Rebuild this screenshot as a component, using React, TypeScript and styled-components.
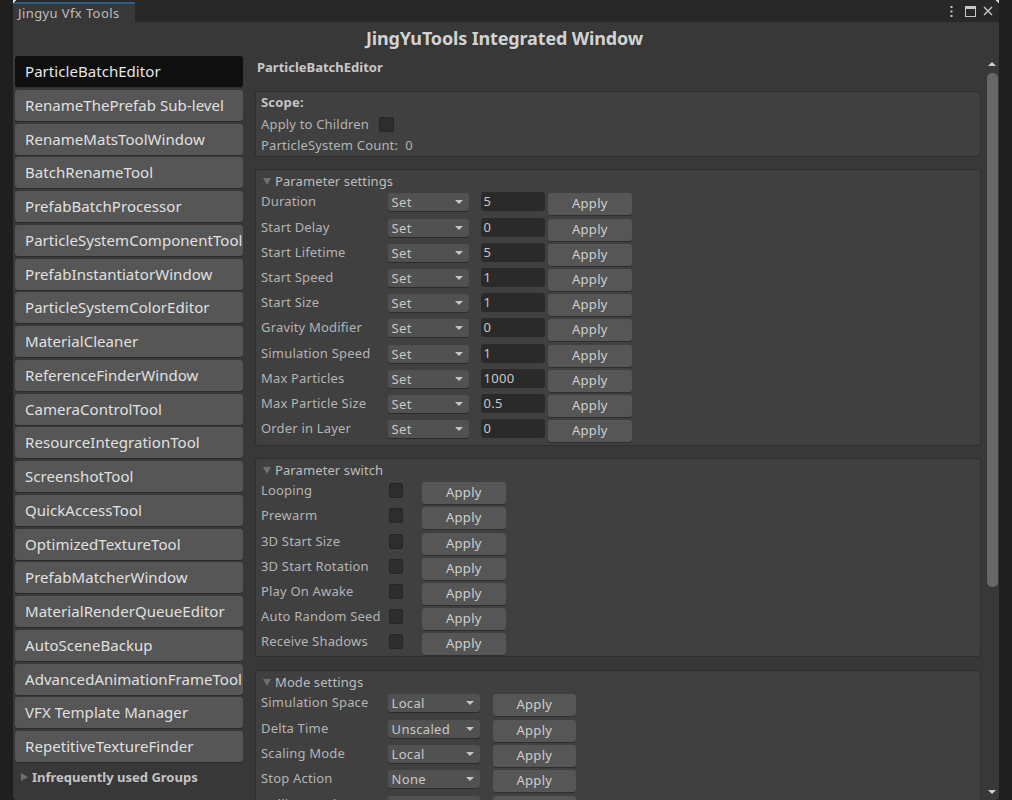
import styled, { createGlobalStyle } from "styled-components"

const GlobalStyle = createGlobalStyle`
  html, body {
    margin: 0;
    height: 800px;
    overflow: hidden;
    background: #1f1f1f;
    font-family: "Noto Sans", "Open Sans", sans-serif;
  }
  * {
    box-sizing: border-box;
  }
`

const Page = styled.div`
  height: 800px;
  padding-left: 13px;
  padding-right: 13px;
  background: #1f1f1f;
  overflow: hidden;
`
const Win = styled.div`
  height: 800px;
  display: flex;
  flex-direction: column;
  background: #383838;
  border-radius: 0 0 4px 4px;
  overflow: hidden;
`
const TabBar = styled.div`
  height: 22px;
  flex: none;
  position: relative;
  display: flex;
  align-items: stretch;
  justify-content: space-between;
  background: #282828;
  &::before,
  &::after {
    content: "";
    position: absolute;
    top: 0;
    width: 4px;
    height: 4px;
  }
  &::before {
    left: 0;
    background: linear-gradient(135deg, #d8d8d8 45%, transparent 50%);
  }
  &::after {
    right: 0;
    background: linear-gradient(225deg, #d8d8d8 45%, transparent 50%);
  }
`
const Tab = styled.div`
  width: 122px;
  margin-top: 2px;
  padding: 1px 0 0 5px;
  border-top: 2px solid #2c5d87;
  background: #383838;
  color: #bdbdbd;
  font-size: 13px;
  line-height: 17px;
  letter-spacing: 0.4px;
`
const TabIcons = styled.div`
  display: flex;
  align-items: center;
  gap: 7px;
  padding: 0 6px 0 0;
  color: #c8c8c8;
`
const DotsIcon = styled.svg`
  margin-right: 5px;
`
const Title = styled.h1`
  height: 34px;
  flex: none;
  margin: 0;
  padding-right: 3px;
  text-align: center;
  color: #d2d2d2;
  font-size: 18px;
  font-weight: 700;
  line-height: 32px;
  letter-spacing: -0.15px;
`
const Body = styled.div`
  flex: 1;
  min-height: 0;
  display: flex;
  padding-left: 2px;
`
const Sidebar = styled.div`
  width: 228px;
  flex: none;
  display: flex;
  flex-direction: column;
  gap: 2.75px;
`
const NavButton = styled.div<{ $active?: boolean }>`
  height: 31px;
  flex: none;
  padding-left: 10px;
  border-radius: 3px;
  background: ${(p) => (p.$active ? "#0f0f0f" : "#565656")};
  box-shadow: 0 1px 0 #2b2b2b;
  color: ${(p) => (p.$active ? "#e6e6e6" : "#e0e0e0")};
  font-size: 15px;
  line-height: 31px;
  letter-spacing: 0.05px;
  white-space: nowrap;
  overflow: hidden;
`
const Foldout = styled.div`
  display: flex;
  align-items: center;
  gap: 4px;
  height: 25px;
  padding-left: 6px;
  color: #c4c4c4;
  font-size: 13px;
  font-weight: 700;
`
const Triangle = styled.span<{ $dir: "right" | "down" }>`
  width: 0;
  height: 0;
  flex: none;
  ${(p) =>
    p.$dir === "right"
      ? "border-top: 4.5px solid transparent; border-bottom: 4.5px solid transparent; border-left: 7px solid #6f6f6f;"
      : "border-left: 4.5px solid transparent; border-right: 4.5px solid transparent; border-top: 7px solid #6f6f6f;"}
`
const Main = styled.div`
  width: 726px;
  flex: none;
  margin-left: 12px;
  overflow: hidden;
`
const Heading = styled.div`
  height: 35px;
  padding: 2px 0 0 2px;
  color: #c8c8c8;
  font-size: 13px;
  font-weight: 700;
  line-height: 18px;
`
const Section = styled.div<{ $bottom?: number; $gap?: number }>`
  margin-bottom: ${(p) => p.$gap ?? 12}px;
  padding: 1px 5px ${(p) => p.$bottom ?? 1.5}px;
  border: 1px solid #2e2e2e;
  border-radius: 3px;
  background: #404040;
`
const ScopeSection = styled(Section)`
  padding-top: 0;
  padding-bottom: 0;
`
const ScopeTitle = styled.div`
  height: 21.5px;
  color: #c4c4c4;
  font-size: 13px;
  font-weight: 700;
  line-height: 20px;
  letter-spacing: 0.2px;
`
const ScopeRow = styled.div`
  display: flex;
  align-items: center;
  gap: 10px;
  height: 21.2px;
`
const SectionHeader = styled.div`
  height: 20.5px;
  display: flex;
  align-items: center;
  gap: 4px;
  padding-left: 2px;
  color: #bdbdbd;
  font-size: 13px;
  letter-spacing: 0.1px;
`
const Row = styled.div<{ $pitch: number }>`
  height: ${(p) => p.$pitch}px;
  display: flex;
  align-items: flex-start;
`
const Label = styled.div<{ $wide?: boolean }>`
  width: ${(p) => (p.$wide ? "auto" : "126.6px")};
  flex: none;
  color: #b4b4b4;
  font-size: 13px;
  line-height: 20px;
  letter-spacing: 0.18px;
  white-space: nowrap;
`
const Select = styled.div<{ $width: number }>`
  width: ${(p) => p.$width}px;
  height: 18px;
  flex: none;
  margin-top: 2px;
  padding: 0 6px 0 4px;
  display: flex;
  align-items: center;
  justify-content: space-between;
  border-radius: 3px;
  background: #515151;
  box-shadow: 0 1px 0 #2b2b2b;
  color: #c8c8c8;
  font-size: 13px;
  letter-spacing: 0.3px;
`
const SelectArrow = styled.span`
  width: 0;
  height: 0;
  border-left: 4px solid transparent;
  border-right: 4px solid transparent;
  border-top: 4.5px solid #c4c4c4;
`
const NumberField = styled.div`
  width: 64px;
  height: 19px;
  flex: none;
  margin: 1px 3.5px 0 12px;
  padding-left: 3px;
  border-radius: 3px;
  background: #2a2a2a;
  color: #c8c8c8;
  font-size: 13px;
  line-height: 19px;
  letter-spacing: 0.3px;
`
const Check = styled.span`
  width: 14.5px;
  height: 15px;
  flex: none;
  border-radius: 3px;
  background: #2d2d2d;
  box-shadow: inset 0 0 0 1px #262626;
`
const SwitchCheck = styled(Check)`
  margin: 3px 19px 0 1px;
`
const ApplyButton = styled.div<{ $left?: number }>`
  width: 83.5px;
  height: 22px;
  flex: none;
  margin-top: 2px;
  margin-left: ${(p) => p.$left ?? 0}px;
  border-radius: 3px;
  background: #565656;
  box-shadow: 0 1px 0 #2e2e2e;
  color: #cfcfcf;
  font-size: 13px;
  line-height: 21px;
  text-align: center;
  letter-spacing: 0.3px;
`
const Scrollbar = styled.div`
  width: 15px;
  flex: none;
  margin-left: 2px;
  display: flex;
  flex-direction: column;
  align-items: center;
  padding-left: 3px;
`
const ScrollUp = styled.span`
  margin-top: 6px;
  width: 0;
  height: 0;
  border-left: 4px solid transparent;
  border-right: 4px solid transparent;
  border-bottom: 4px solid #d0d0d0;
`
const ScrollThumb = styled.div`
  width: 11px;
  height: 514px;
  margin-top: 7px;
  border-radius: 5px;
  background: #676767;
`
const ScrollDown = styled.span`
  margin-top: auto;
  margin-bottom: 6px;
  width: 0;
  height: 0;
  border-left: 4px solid transparent;
  border-right: 4px solid transparent;
  border-top: 4px solid #d0d0d0;
`

const tools = [
  "RenameThePrefab Sub-level",
  "RenameMatsToolWindow",
  "BatchRenameTool",
  "PrefabBatchProcessor",
  "ParticleSystemComponentTool",
  "PrefabInstantiatorWindow",
  "ParticleSystemColorEditor",
  "MaterialCleaner",
  "ReferenceFinderWindow",
  "CameraControlTool",
  "ResourceIntegrationTool",
  "ScreenshotTool",
  "QuickAccessTool",
  "OptimizedTextureTool",
  "PrefabMatcherWindow",
  "MaterialRenderQueueEditor",
  "AutoSceneBackup",
  "AdvancedAnimationFrameTool",
  "VFX Template Manager",
  "RepetitiveTextureFinder",
]

const params = [
  ["Duration", "5"],
  ["Start Delay", "0"],
  ["Start Lifetime", "5"],
  ["Start Speed", "1"],
  ["Start Size", "1"],
  ["Gravity Modifier", "0"],
  ["Simulation Speed", "1"],
  ["Max Particles", "1000"],
  ["Max Particle Size", "0.5"],
  ["Order in Layer", "0"],
]

const switches = [
  "Looping",
  "Prewarm",
  "3D Start Size",
  "3D Start Rotation",
  "Play On Awake",
  "Auto Random Seed",
  "Receive Shadows",
]

const modes = [
  ["Simulation Space", "Local"],
  ["Delta Time", "Unscaled"],
  ["Scaling Mode", "Local"],
  ["Stop Action", "None"],
  ["Culling Mode", "Automatic"],
]

function App() {
  return (
    <Page>
      <GlobalStyle />
      <Win>
        <TabBar>
          <Tab>Jingyu Vfx Tools</Tab>
          <TabIcons>
            <DotsIcon width="3" height="11" viewBox="0 0 3 11">
              <rect x="0.5" y="0" width="2" height="2" fill="currentColor" />
              <rect x="0.5" y="4.5" width="2" height="2" fill="currentColor" />
              <rect x="0.5" y="9" width="2" height="2" fill="currentColor" />
            </DotsIcon>
            <svg width="11" height="11" viewBox="0 0 11 11">
              <rect x="0.5" y="0.5" width="10" height="10" fill="none" stroke="currentColor" />
              <rect x="0" y="0" width="11" height="3" fill="currentColor" />
            </svg>
            <svg width="10" height="10" viewBox="0 0 10 10">
              <path d="M1 1 L9 9 M9 1 L1 9" stroke="currentColor" strokeWidth="1.4" />
            </svg>
          </TabIcons>
        </TabBar>
        <Title>JingYuTools Integrated Window</Title>
        <Body>
          <Sidebar>
            <NavButton $active>ParticleBatchEditor</NavButton>
            {tools.map((t) => (
              <NavButton key={t}>{t}</NavButton>
            ))}
            <Foldout>
              <Triangle $dir="right" />
              Infrequently used Groups
            </Foldout>
          </Sidebar>
          <Main>
            <Heading>ParticleBatchEditor</Heading>
            <ScopeSection>
              <ScopeTitle>Scope:</ScopeTitle>
              <ScopeRow>
                <Label $wide>Apply to Children</Label>
                <Check />
              </ScopeRow>
              <ScopeRow>
                <Label $wide>ParticleSystem Count:&nbsp; 0</Label>
              </ScopeRow>
            </ScopeSection>
            <Section>
              <SectionHeader>
                <Triangle $dir="down" />
                Parameter settings
              </SectionHeader>
              {params.map(([name, value]) => (
                <Row $pitch={25.2} key={name}>
                  <Label>{name}</Label>
                  <Select $width={81}>
                    Set
                    <SelectArrow />
                  </Select>
                  <NumberField>{value}</NumberField>
                  <ApplyButton>Apply</ApplyButton>
                </Row>
              ))}
            </Section>
            <Section $bottom={0} $gap={12.5}>
              <SectionHeader>
                <Triangle $dir="down" />
                Parameter switch
              </SectionHeader>
              {switches.map((name) => (
                <Row $pitch={25.17} key={name}>
                  <Label>{name}</Label>
                  <SwitchCheck />
                  <ApplyButton>Apply</ApplyButton>
                </Row>
              ))}
            </Section>
            <Section>
              <SectionHeader>
                <Triangle $dir="down" />
                Mode settings
              </SectionHeader>
              {modes.map(([name, value]) => (
                <Row $pitch={25.3} key={name}>
                  <Label>{name}</Label>
                  <Select $width={92}>
                    {value}
                    <SelectArrow />
                  </Select>
                  <ApplyButton $left={13}>Apply</ApplyButton>
                </Row>
              ))}
            </Section>
          </Main>
          <Scrollbar>
            <ScrollUp />
            <ScrollThumb />
            <ScrollDown />
          </Scrollbar>
        </Body>
      </Win>
    </Page>
  )
}

export default App
